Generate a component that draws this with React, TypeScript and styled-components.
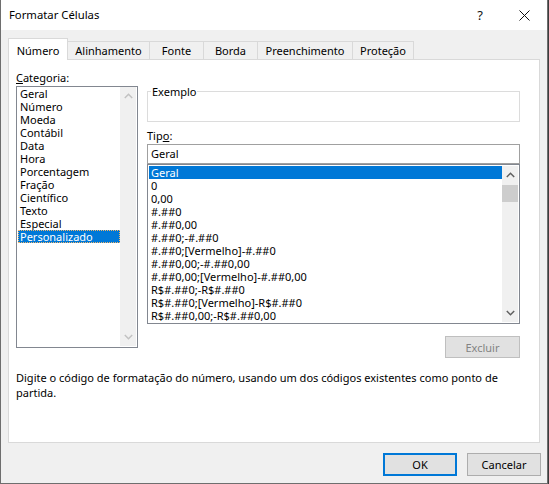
import React from "react";
import styled, { createGlobalStyle } from "styled-components";

const GlobalStyle = createGlobalStyle`
  html, body { margin: 0; padding: 0; background: #3c3c3c; }
  body {
    font-family: "Noto Sans", "Open Sans", sans-serif;
    font-size: 11px;
    color: #000;
  }
  * { box-sizing: border-box; }
`;

const Window = styled.div`
  width: 548px;
  height: 484px;
  display: flex;
  flex-direction: column;
  background: #f0f0f0;
  border-left: 1px solid #6e6e6e;
  border-right: 1px solid #6e6e6e;
  border-bottom: 1px solid #6e6e6e;
`;

const TitleBar = styled.div`
  height: 30px;
  flex: none;
  background: #fff;
  display: flex;
  align-items: center;
  padding-left: 8px;
`;

const Title = styled.div`
  flex: 1;
  font-size: 11.3px;
  line-height: 16px;
`;

const TitleButton = styled.div<{ $w: number }>`
  width: ${(p) => p.$w}px;
  height: 30px;
  display: flex;
  align-items: center;
  justify-content: center;
  font-size: 13px;
  color: #111;
`;

const Body = styled.div`
  flex: 1;
  display: flex;
  flex-direction: column;
  padding: 8px 7px 0 7px;
`;

const TabRow = styled.div`
  display: flex;
  height: 22px;
  align-items: flex-start;
  position: relative;
  z-index: 1;
  margin-bottom: -1px;
`;

const Tab = styled.div<{ $w: number; $active?: boolean }>`
  width: ${(p) => p.$w}px;
  height: ${(p) => (p.$active ? 22 : 19)}px;
  margin-top: ${(p) => (p.$active ? 0 : 3)}px;
  margin-left: -1px;
  &:first-child { margin-left: 0; }
  border: 1px solid #d9d9d9;
  border-bottom: ${(p) => (p.$active ? "none" : "1px solid #d9d9d9")};
  background: ${(p) => (p.$active ? "#fff" : "#f0f0f0")};
  position: relative;
  z-index: ${(p) => (p.$active ? 2 : 1)};
  display: flex;
  justify-content: center;
  align-items: ${(p) => (p.$active ? "flex-start" : "center")};
  padding-top: ${(p) => (p.$active ? 4 : 0)}px;
  line-height: 15px;
  white-space: nowrap;
`;

const Panel = styled.div`
  height: 384px;
  flex: none;
  background: #fff;
  border: 1px solid #d9d9d9;
  padding: 10px 19px 0 7px;
  display: grid;
  grid-template-columns: 122px 373px;
  column-gap: 9px;
  align-content: start;
`;

const Column = styled.div`
  display: flex;
  flex-direction: column;
`;

const FieldLabel = styled.div<{ $mt?: number }>`
  line-height: 15px;
  height: 15px;
  margin-top: ${(p) => p.$mt ?? 0}px;
  margin-bottom: 1px;
`;

const ListBox = styled.div<{ $h: number; $padTop: number }>`
  height: ${(p) => p.$h}px;
  border: 1px solid #828790;
  background: #fff;
  padding: ${(p) => p.$padTop}px 1px 1px 1px;
  display: flex;
`;

const Items = styled.div`
  flex: 1;
  display: flex;
  flex-direction: column;
  overflow: hidden;
`;

const Item = styled.div<{ $selected?: boolean; $focus?: boolean }>`
  height: 13px;
  line-height: 13px;
  padding-left: 2px;
  white-space: nowrap;
  background: ${(p) => (p.$selected ? "#0078d7" : "transparent")};
  color: ${(p) => (p.$selected ? "#fff" : "#000")};
  outline: ${(p) => (p.$focus ? "1px dotted #f3b66a" : "none")};
  outline-offset: -1px;
`;

const ScrollBar = styled.div`
  width: 16px;
  flex: none;
  background: #f0f0f0;
  display: flex;
  flex-direction: column;
`;

const ArrowBox = styled.div`
  height: 18px;
  flex: none;
  display: flex;
  align-items: center;
  justify-content: center;
`;

const Track = styled.div`
  flex: 1;
  display: flex;
  flex-direction: column;
`;

const Thumb = styled.div`
  height: 17px;
  margin-top: 1px;
  background: #cdcdcd;
`;

const GroupBox = styled.div`
  margin-top: 21px;
  height: 31px;
  border: 1px solid #dcdcdc;
  position: relative;
`;

const Legend = styled.div`
  position: absolute;
  top: -8px;
  left: 3px;
  padding: 0 1px;
  background: #fff;
  line-height: 15px;
`;

const TextInput = styled.div`
  height: 20px;
  border: 1px solid #a0a0a0;
  padding-left: 3px;
  line-height: 18px;
  background: #fff;
`;

const Button = styled.div<{ $w: number; $h: number; $variant?: "default" | "disabled" | "primary" }>`
  width: ${(p) => p.$w}px;
  height: ${(p) => p.$h}px;
  display: flex;
  align-items: center;
  justify-content: center;
  background: #e1e1e1;
  border: ${(p) =>
    p.$variant === "primary" ? "2px solid #0078d7" : p.$variant === "disabled" ? "1px solid #bfbfbf" : "1px solid #adadad"};
  color: ${(p) => (p.$variant === "disabled" ? "#838383" : "#000")};
  line-height: 15px;
`;

const ButtonRow = styled.div`
  display: flex;
  justify-content: flex-end;
  margin-top: 12px;
`;

const Description = styled.div`
  grid-column: 1 / span 2;
  margin-top: 12px;
  line-height: 15px;
  white-space: nowrap;
`;

const Footer = styled.div`
  display: flex;
  justify-content: flex-end;
  gap: 10px;
  padding-top: 10px;
  margin-right: -1px;
`;

const Chevron = ({ dir, color }: { dir: "up" | "down"; color: string }) => (
  <svg width="9" height="6" viewBox="0 0 9 6">
    <polyline
      points={dir === "up" ? "0.8,5 4.5,1.3 8.2,5" : "0.8,1 4.5,4.7 8.2,1"}
      fill="none"
      stroke={color}
      strokeWidth="1.5"
    />
  </svg>
);

const CloseIcon = () => (
  <svg width="11" height="11" viewBox="0 0 11 11">
    <path d="M0.5 0.5 L10.5 10.5 M10.5 0.5 L0.5 10.5" stroke="#111" strokeWidth="1" fill="none" />
  </svg>
);

const tabs = [
  { label: "Número", w: 60, active: true },
  { label: "Alinhamento", w: 83 },
  { label: "Fonte", w: 55 },
  { label: "Borda", w: 55 },
  { label: "Preenchimento", w: 96 },
  { label: "Proteção", w: 62 },
];

const categories = [
  "Geral",
  "Número",
  "Moeda",
  "Contábil",
  "Data",
  "Hora",
  "Porcentagem",
  "Fração",
  "Científico",
  "Texto",
  "Especial",
  "Personalizado",
];

const formats = [
  "Geral",
  "0",
  "0,00",
  "#.##0",
  "#.##0,00",
  "#.##0;-#.##0",
  "#.##0;[Vermelho]-#.##0",
  "#.##0,00;-#.##0,00",
  "#.##0,00;[Vermelho]-#.##0,00",
  "R$#.##0;-R$#.##0",
  "R$#.##0;[Vermelho]-R$#.##0",
  "R$#.##0,00;-R$#.##0,00",
];

export default function App() {
  return (
    <>
      <GlobalStyle />
      <Window>
        <TitleBar>
          <Title>Formatar Células</Title>
          <TitleButton $w={44}>?</TitleButton>
          <TitleButton $w={45}>
            <CloseIcon />
          </TitleButton>
        </TitleBar>
        <Body>
          <TabRow>
            {tabs.map((t) => (
              <Tab key={t.label} $w={t.w} $active={t.active}>
                {t.label}
              </Tab>
            ))}
          </TabRow>
          <Panel>
            <Column>
              <FieldLabel>
                <u>C</u>ategoria:
              </FieldLabel>
              <ListBox $h={262} $padTop={0}>
                <Items>
                  {categories.map((c) => (
                    <Item key={c} $selected={c === "Personalizado"} $focus={c === "Personalizado"}>
                      {c}
                    </Item>
                  ))}
                </Items>
                <ScrollBar>
                  <ArrowBox>
                    <Chevron dir="up" color="#c2c2c2" />
                  </ArrowBox>
                  <Track />
                  <ArrowBox>
                    <Chevron dir="down" color="#c2c2c2" />
                  </ArrowBox>
                </ScrollBar>
              </ListBox>
            </Column>
            <Column>
              <GroupBox>
                <Legend>Exemplo</Legend>
              </GroupBox>
              <FieldLabel $mt={6}>
                Tip<u>o</u>:
              </FieldLabel>
              <TextInput>Geral</TextInput>
              <ListBox $h={160} $padTop={1}>
                <Items>
                  {formats.map((f, i) => (
                    <Item key={f + i} $selected={i === 0}>
                      {f}
                    </Item>
                  ))}
                </Items>
                <ScrollBar>
                  <ArrowBox>
                    <Chevron dir="up" color="#606060" />
                  </ArrowBox>
                  <Track>
                    <Thumb />
                  </Track>
                  <ArrowBox>
                    <Chevron dir="down" color="#606060" />
                  </ArrowBox>
                </ScrollBar>
              </ListBox>
              <ButtonRow>
                <Button $w={75} $h={22} $variant="disabled">
                  Excluir
                </Button>
              </ButtonRow>
            </Column>
            <Description>
              Digite o código de formatação do número, usando um dos códigos existentes como ponto de
              <br />
              partida.
            </Description>
          </Panel>
          <Footer>
            <Button $w={74} $h={23} $variant="primary">
              OK
            </Button>
            <Button $w={74} $h={23}>
              Cancelar
            </Button>
          </Footer>
        </Body>
      </Window>
    </>
  );
}
